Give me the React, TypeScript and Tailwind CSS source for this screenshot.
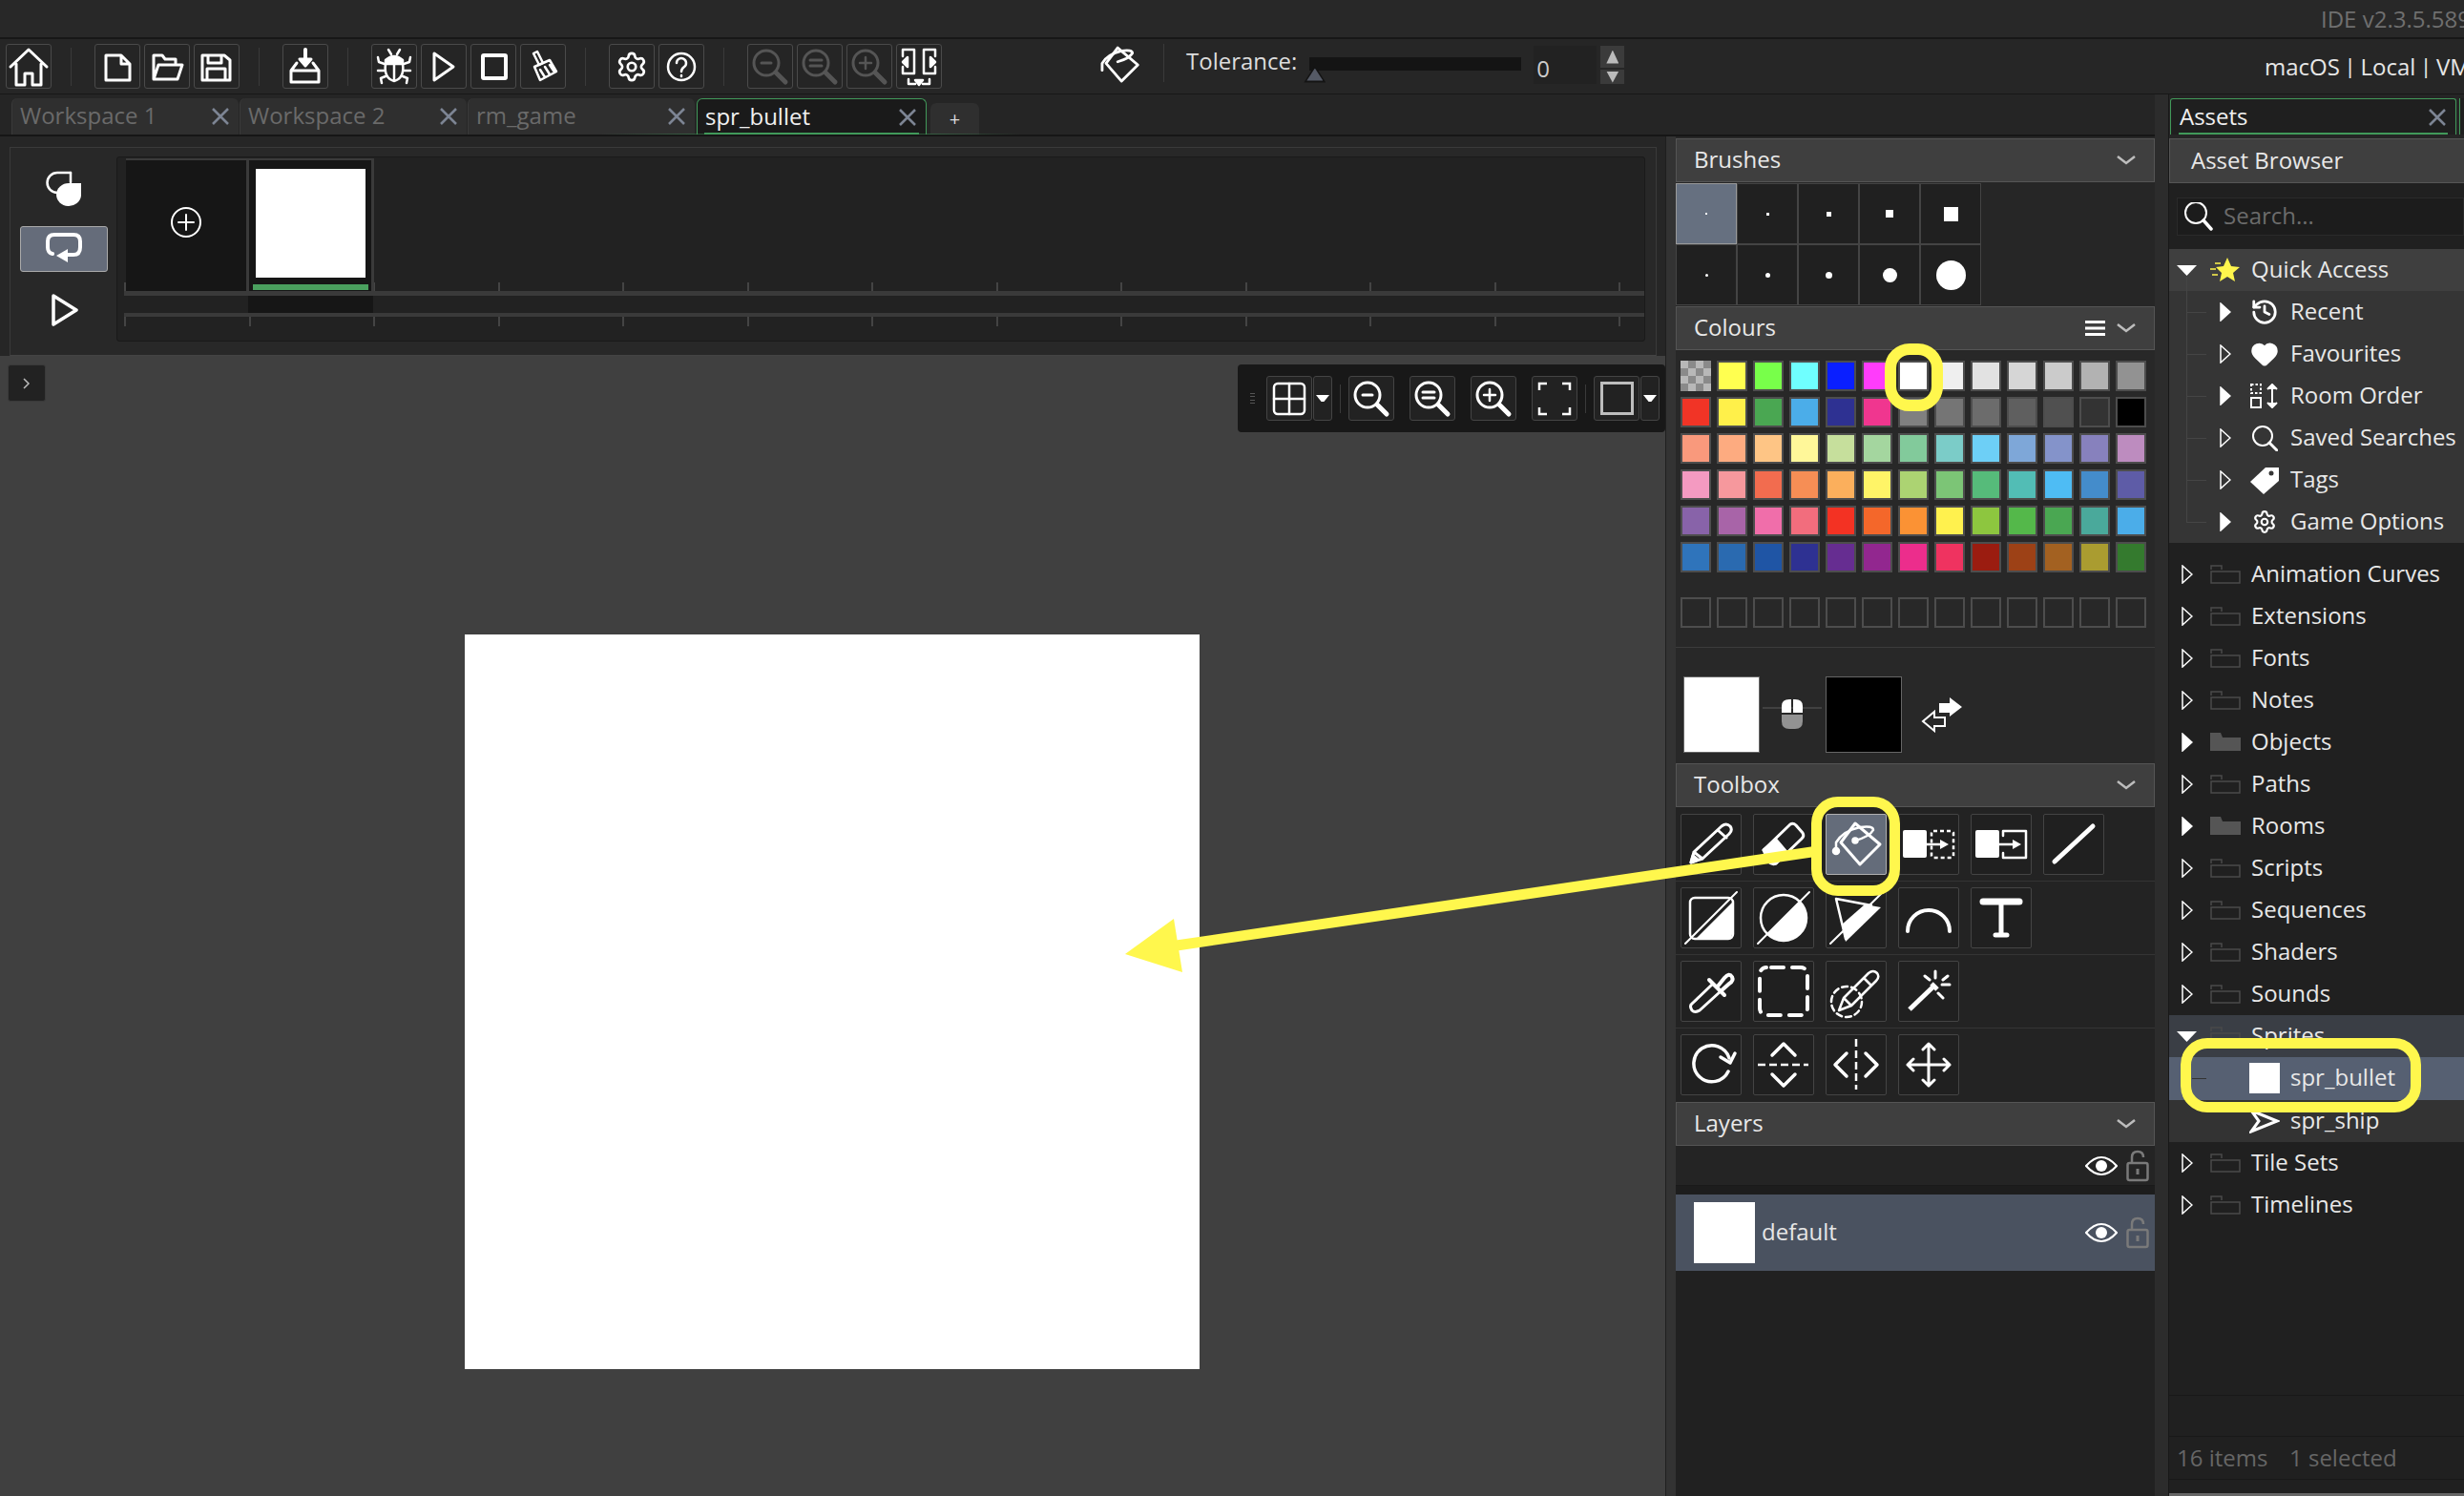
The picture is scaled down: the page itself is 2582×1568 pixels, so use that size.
import type { ReactNode } from 'react';
import { History, Heart, Settings } from 'lucide-react';

// 48px toolbar icon, drawn in a 48 box
function Ico({ children, size = 48, box = 48, sw = 3, color = 'white' }: { children: ReactNode; size?: number; box?: number; sw?: number; color?: string }) {
  return (
    <svg width={size} height={size} viewBox={`0 0 ${box} ${box}`} fill="none" stroke={color} strokeWidth={sw} strokeLinejoin="round" strokeLinecap="round" className="shrink-0">
      {children}
    </svg>
  );
}

function Btn({ children }: { children: ReactNode }) {
  return <div className="w-[48px] h-[47px] shrink-0 flex items-center justify-center rounded-[3px] border border-[#4a4a4a] bg-[#252525]">{children}</div>;
}

function Sep() {
  return <div className="w-px h-[40px] bg-[#3a3a3a] ml-[20px] mr-[24px] shrink-0" />;
}

function Mag({ inner, color = 'white' }: { inner: 'minus' | 'eq' | 'plus'; color?: string }) {
  return (
    <Ico color={color}>
      <circle cx="20" cy="20" r="13" />
      <path d="M30 30 L40 40" strokeWidth="5" />
      {inner === 'minus' && <path d="M15 20 H25" />}
      {inner === 'eq' && <path d="M14 17 H26 M14 23 H26" />}
      {inner === 'plus' && <path d="M14 20 H26 M20 14 V26" strokeWidth="2.5" />}
    </Ico>
  );
}

function BucketIcon({ size = 64 }: { size?: number }) {
  return (
    <Ico size={size} box={64} sw={2.5}>
      <path d="M31 10 L57 32 L36 53 L16 30 Z" strokeWidth="3" />
      <path d="M31 28 Q46 24 50 17 Q50 12 36 14 Q18 18 11 30 V39" />
      <circle cx="31" cy="28" r="2.5" fill="white" />
      <circle cx="11" cy="39" r="3" fill="white" />
    </Ico>
  );
}

function TopToolbar() {
  return (
    <div className="h-[58px] flex items-center pl-[6px] bg-[#262626] border-b border-[#171717]">
      <Btn>
        <Ico>
          <path d="M5 24 L24 6 L43 24 M11 21 V43 H20 V31 H28 V43 H37 V21" />
        </Ico>
      </Btn>
      <Sep />
      <div className="flex gap-[4px]">
        <Btn>
          <Ico>
            <path d="M12 12 H28 L37 21 V38 H12 Z M28 12 V21 H37" />
          </Ico>
        </Btn>
        <Btn>
          <Ico>
            <path d="M10 37 V12 H19 L22 16 H33 V20 M10 37 L15 22 H40 L35 37 Z" />
          </Ico>
        </Btn>
        <Btn>
          <Ico>
            <path d="M9 12 H32 L38 17 V38 H9 Z M15 12 V20 H29 V12 M14 38 V26 H33 V38" />
          </Ico>
        </Btn>
      </div>
      <Sep />
      <Btn>
        <Ico>
          <path d="M9 28 V40 H38 V28 Z M9 28 L15 20 M38 28 L32 20" />
          <path d="M24 6 V18" strokeWidth="4" />
          <path d="M18 16 H30 L24 23 Z" fill="white" />
        </Ico>
      </Btn>
      <Sep />
      <div className="flex gap-[4px]">
        <Btn>
          <Ico sw={2.5}>
            <path d="M15 21 Q13 36 24 39 Q35 36 33 21 Z M24 21 V39" />
            <path d="M15 17 Q24 9 33 17 V19 H15 Z" fill="white" />
            <path d="M18 6 L21 11 M30 6 L27 11 M14 21 L8 19 L7 14 M14 28 H7 M15 34 L10 36 L11 41 M34 21 L40 19 L41 14 M34 28 H41 M33 34 L38 36 L37 41" />
          </Ico>
        </Btn>
        <Btn>
          <Ico>
            <path d="M14 10 L34 24 L14 38 Z" />
          </Ico>
        </Btn>
        <Btn>
          <Ico sw={4}>
            <rect x="13" y="12" width="24" height="24" rx="1" />
          </Ico>
        </Btn>
        <Btn>
          <Ico sw={2.5}>
            <path d="M14 10 L18 8 L24 20 L20 22 Z" />
            <path d="M15 24 L31 17 L38 29 L21 38 Z M21 27 L26 35 M26 24 L31 32 M31 22 L35 28" />
          </Ico>
        </Btn>
      </div>
      <Sep />
      <div className="flex gap-[4px]">
        <Btn>
          <Settings size={34} color="white" strokeWidth={1.9} />
        </Btn>
        <Btn>
          <Ico sw={2.5}>
            <circle cx="24" cy="24" r="14" />
            <path d="M19 20 A5 5 0 1 1 27 24 C25 25.5 24 26.5 24 29 M24 33 V34" />
          </Ico>
        </Btn>
      </div>
      <Sep />
      <div className="flex gap-[4px]">
        <Btn>
          <Mag inner="minus" color="#555555" />
        </Btn>
        <Btn>
          <Mag inner="eq" color="#555555" />
        </Btn>
        <Btn>
          <Mag inner="plus" color="#555555" />
        </Btn>
        <Btn>
          <Ico sw={2.5}>
            <path d="M7 13 V6 H19 V31 H7 V24 M41 13 V6 H29 V31 H41 V24 M13 37 V42 H20 M35 37 V42 H28" />
            <path d="M12 14 L7 19 L12 24 Z M36 14 L41 19 L36 24 Z M20 38 H28 L24 43 Z" fill="white" />
          </Ico>
        </Btn>
      </div>
      <div className="ml-[159px] mb-[4px] flex items-center">
        <Ico size={52} box={64}>
          <path d="M31 10 L57 32 L36 53 L16 30 Z" strokeWidth="3.5" />
          <path d="M31 28 Q46 24 50 17 Q50 12 36 14 Q18 18 11 30 V39" strokeWidth="3.5" />
        </Ico>
      </div>
      <div className="w-px h-[40px] bg-[#3a3a3a] ml-[21px] mr-[23px] mb-[8px]" />
      <span className="text-[24px] text-[#dddddd] mb-[11px] leading-none">Tolerance:</span>
      <div className="relative ml-[13px] w-[222px] h-[14px] bg-[#141414] mb-[6px]">
        <div className="absolute left-[-6px] top-[9px] w-[23px] h-[18px] bg-[#141414] [clip-path:polygon(50%_0,100%_100%,0_100%)]" />
        <div className="absolute left-[-3px] top-[12px] w-[17px] h-[13px] bg-[#555a66] [clip-path:polygon(50%_0,100%_100%,0_100%)]" />
      </div>
      <div className="ml-[13px] w-[66px] h-[40px] bg-[#222222] flex items-end text-[#cccccc] text-[24px] pl-[3px] leading-[32px] mb-[3px]">0</div>
      <div className="ml-[4px] w-[25px] h-[40px] flex flex-col gap-[2px] mb-[3px]">
        <div className="h-[23px] bg-[#3b3b3b] flex items-center justify-center">
          <div className="w-[13px] h-[14px] bg-[#bbbbbb] [clip-path:polygon(50%_0,100%_100%,0_100%)]" />
        </div>
        <div className="h-[15px] bg-[#3b3b3b] flex items-center justify-center">
          <div className="w-[13px] h-[12px] bg-[#bbbbbb] [clip-path:polygon(0_0,100%_0,50%_100%)]" />
        </div>
      </div>
      <div className="flex-1" />
      <div className="w-[209px] overflow-hidden whitespace-nowrap text-[24px] text-[#e6e6e6] leading-none [word-spacing:-2px]">macOS | Local | VM | Default</div>
    </div>
  );
}

function CloseX({ color = '#7d8594' }: { color?: string }) {
  return (
    <svg width="18" height="18" viewBox="0 0 18 18" fill="none" stroke={color} strokeWidth="2.5" className="shrink-0">
      <path d="M1 1 L17 17 M17 1 L1 17" />
    </svg>
  );
}

function Tab({ label, active }: { label: string; active?: boolean }) {
  return (
    <div className={`h-[38px] shrink-0 flex items-center justify-between pl-[8px] pr-[10px] rounded-t-[6px] text-[24px] leading-none ${active ? 'w-[241px] ml-px bg-[#1a1a1a] text-[#f0f0f0] border border-b-0 border-[#41995a] relative' : 'w-[238px] bg-[#2f2f2f] text-[#6a6a6a] border-l border-[#3a3a3a]'}`}>
      <span className="mb-[2px]">{label}</span>
      <CloseX />
      {active && <div className="absolute left-[7px] right-[7px] bottom-0 h-[2px] bg-[#41995a]" />}
    </div>
  );
}

function TabBar() {
  return (
    <div className="h-[44px] bg-[#252525] border-b-2 border-[#161616] relative">
      <div className="flex items-end pl-[12px] pt-[4px] gap-[1px]">
        <Tab label="Workspace 1" />
        <Tab label="Workspace 2" />
        <Tab label="rm_game" />
        <Tab label="spr_bullet" active />
        <div className="w-[51px] h-[33px] ml-[3px] bg-[#2f2f2f] rounded-t-[6px] flex items-center justify-center text-[#dddddd] text-[20px] leading-none">+</div>
      </div>
      <div className="absolute left-[630px] bottom-0 w-[440px] h-px bg-gradient-to-r from-transparent via-[#41995a] to-transparent" />
    </div>
  );
}

function Ticks({ n, h }: { n: number; h: string }) {
  return (
    <div className={`flex ${h}`}>
      {Array.from({ length: n }).map((_, i) => (
        <div key={i} className="w-[130.5px] shrink-0 h-full border-l-2 border-[#444444]" />
      ))}
    </div>
  );
}

function Timeline() {
  return (
    <div className="h-[230px] shrink-0 bg-[#262626] pt-[11px] pl-[10px] pr-[9px]">
      <div className="h-[219px] flex bg-[#282828] border border-[#3a3a3a] border-b-[#444444]">
        <div className="w-[111px] shrink-0 flex flex-col items-center pl-[1px]">
          <div className="mt-[24px]">
            <Ico size={38} box={38} sw={2.5}>
              <path d="M26 2 H12 A10 10 0 0 0 12 23" />
              <path d="M26 2 V12" />
              <path d="M24 13 H37 V26 A13 12 0 1 1 24 13 Z" fill="white" stroke="none" />
            </Ico>
          </div>
          <div className="mt-[20px] w-[92px] h-[48px] flex items-center justify-center bg-[#656c7a] border border-[#aaaaaa] rounded-[3px]">
            <Ico size={40} box={40} sw={4}>
              <path d="M8 25 Q3 24 3 18 V12 Q3 5 10 5 H30 Q37 5 37 12 V18 Q37 26 30 26 H22" />
              <path d="M24 20 L12 27 L24 34 Z" fill="white" stroke="none" />
            </Ico>
          </div>
          <div className="mt-[23px]">
            <Ico size={34} box={34} sw={3.5}>
              <path d="M6 2 L30 17 L6 32 Z" />
            </Ico>
          </div>
        </div>
        <div className="mt-[9px] w-[1602px] h-[194px] bg-[#222222] border border-[#1a1a1a] rounded-[3px] pl-[7px] pt-px">
          <div className="relative h-[139px]">
            <div className="absolute left-0 bottom-0">
              <Ticks n={13} h="h-[9px]" />
            </div>
            <div className="relative flex h-full pl-[2px]">
              <div className="w-[129px] h-full bg-[#161616] border-t-2 border-[#3a3a3a] border-r-[3px] flex items-center justify-center pb-[8px]">
                <Ico size={34} box={34} sw={2}>
                  <circle cx="17" cy="17" r="15" />
                  <path d="M9 17 H25 M17 9 V25" />
                </Ico>
              </div>
              <div className="w-[131px] h-full bg-[#161616] border-t-2 border-r-[3px] border-[#3a3a3a] flex flex-col items-center">
                <div className="mt-[9px] w-[115px] h-[114px] bg-white" />
                <div className="mt-[7px] w-[121px] h-[6px] bg-[#4aa05e]" />
              </div>
            </div>
          </div>
          <div className="h-[5px] bg-[#3a3a3a]" />
          <div className="h-[18px] pl-[130px]">
            <div className="w-[131px] h-full bg-[#161616]" />
          </div>
          <div className="h-[4px] bg-[#3a3a3a]" />
          <Ticks n={13} h="h-[10px]" />
        </div>
      </div>
    </div>
  );
}

function FloatBtn({ children }: { children: ReactNode }) {
  return <div className="w-[48px] h-[47px] rounded-[3px] border border-[#444444] bg-[#222222] flex items-center justify-center shrink-0">{children}</div>;
}

function Drop() {
  return (
    <div className="w-[20px] h-[47px] ml-px rounded-[3px] border border-[#444444] bg-[#222222] flex items-center justify-center shrink-0">
      <div className="w-[14px] h-[7px] bg-white [clip-path:polygon(0_0,100%_0,60%_100%,40%_100%)]" />
    </div>
  );
}

function Canvas() {
  return (
    <div className="relative flex-1 bg-[#404040] pl-[487px] pt-[292px]">
      <div className="w-[770px] h-[770px] bg-white" />
      <div className="absolute left-[8px] top-[9px] w-[40px] h-[39px] rounded-[3px] bg-[#222222] border border-[#3a3a3a] flex items-center justify-center text-[#bbbbbb]">
        <svg width="8" height="14" viewBox="0 0 8 14" fill="none" stroke="#bbbbbb" strokeWidth="1.5">
          <path d="M1 2 L6 7 L1 12" />
        </svg>
      </div>
      <div className="absolute left-[1297px] top-[9px] w-[448px] h-[71px] bg-[#181818] rounded-[4px] flex items-center pl-[13px]">
        <div className="w-[17px] h-[12px] flex flex-col justify-between items-start shrink-0">
          <div className="w-[5px] h-px bg-[#555555]" />
          <div className="w-[5px] h-px bg-[#555555]" />
          <div className="w-[5px] h-px bg-[#555555]" />
          <div className="w-[5px] h-px bg-[#555555]" />
        </div>
        <FloatBtn>
          <Ico size={38} box={38} sw={2.5}>
            <rect x="3" y="3" width="32" height="32" rx="4" />
            <path d="M19 3 V35 M3 19 H35" />
          </Ico>
        </FloatBtn>
        <Drop />
        <div className="w-px h-[30px] bg-[#3a3a3a] mx-[8px] shrink-0" />
        <FloatBtn>
          <Mag inner="minus" />
        </FloatBtn>
        <div className="w-[16px] shrink-0" />
        <FloatBtn>
          <Mag inner="eq" />
        </FloatBtn>
        <div className="w-[16px] shrink-0" />
        <FloatBtn>
          <Mag inner="plus" />
        </FloatBtn>
        <div className="w-[16px] shrink-0" />
        <FloatBtn>
          <Ico size={38} box={38} sw={2.5}>
            <path d="M3 10 V3 H11 M27 3 H35 V10 M35 28 V35 H27 M11 35 H3 V28" strokeLinecap="butt" strokeLinejoin="miter" />
          </Ico>
        </FloatBtn>
        <div className="w-px h-[30px] bg-[#3a3a3a] mx-[8px] shrink-0" />
        <FloatBtn>
          <div className="w-[35px] h-[35px] border-[3px] border-[#bdbdbd]" />
        </FloatBtn>
        <Drop />
      </div>
    </div>
  );
}

function PanelHeader({ title, children }: { title: string; children?: ReactNode }) {
  return (
    <div className="h-[46px] shrink-0 bg-[#3f3f3f] border border-[#555555] flex items-center pl-[18px] pr-[19px] text-[24px] text-[#e8e8e8] leading-none">
      <span className="flex-1 pb-[2px]">{title}</span>
      {children}
      <svg width="20" height="12" viewBox="0 0 20 12" fill="none" stroke="#bdbdbd" strokeWidth="2.5">
        <path d="M1 2 L10 9 L19 2" />
      </svg>
    </div>
  );
}

const brushSizes = [2, 3, 5, 8, 15];
const circleSizes = [3, 5, 7, 15, 31];

function Brushes() {
  return (
    <div className="bg-[#262626] h-[130px] shrink-0 pt-px">
      {[brushSizes, circleSizes].map((row, r) => (
        <div key={r} className="flex h-[64px]">
          {row.map((s, i) => (
            <div key={i} className={`w-[64px] h-[64px] flex items-center justify-center border ${r === 0 && i === 0 ? 'bg-[#667080] border-[#9a9a9a]' : 'bg-[#202020] border-[#444444]'}`}>
              <div className={`bg-white ${r === 1 ? 'rounded-full' : ''}`} style={{ width: s, height: s }} />
            </div>
          ))}
        </div>
      ))}
    </div>
  );
}

const swatches = [
  '#ffff50', '#78ff4a', '#6fffff', '#0a1fff', '#ff3cfb', '#ffffff', '#efefef', '#e2e2e2', '#d6d6d6', '#cbcbcb', '#b2b2b2', '#929292',
  '#f13426', '#fff04a', '#4aa752', '#4bade9', '#2e3192', '#f0368f', '#808080', '#757575', '#6c6c6c', '#5f5f5f', '#505050', '#333333', '#000000',
  '#f9997c', '#fdab80', '#fec585', '#fff799', '#c6df9c', '#a4d69f', '#82ca9b', '#7bccc8', '#6dcff6', '#7ea7d8', '#8493ca', '#8781bd', '#bd8cbf',
  '#f49ac1', '#f6989d', '#f26c4f', '#f68e55', '#fbaf5c', '#fff467', '#acd372', '#7cc576', '#56bb7a', '#52bdb5', '#4ebcf4', '#448ccb', '#5e5ca7',
  '#8863a9', '#a864a8', '#f06eaa', '#f26d7d', '#f33223', '#f4672a', '#fb9234', '#fff14e', '#8dc63f', '#54b84a', '#4aa752', '#4aa99b', '#4bade9',
  '#2f74bb', '#2a6ab0', '#1f55a5', '#2e3192', '#662d91', '#92278f', '#ec2d8c', '#ef3360', '#9b1c10', '#9d4116', '#a36121', '#aa9c30', '#347a2e',
];

function Colours() {
  return (
    <div className="h-[433px] shrink-0 bg-[#282828] pt-[11px]">
      <div className="grid grid-cols-[repeat(13,32px)] gap-[6px] pl-[5px]">
        <div className="w-[32px] h-[32px] bg-[conic-gradient(#8a8a8a_25%,#b8b8b8_0_50%,#8a8a8a_0_75%,#b8b8b8_0)] bg-[length:16px_16px]" />
        {swatches.map((c, i) => (
          <div key={i} className="w-[32px] h-[32px] border-2 border-[#4d4d4d]" style={{ backgroundColor: c }} />
        ))}
      </div>
      <div className="grid grid-cols-[repeat(13,32px)] gap-[6px] pl-[5px] mt-[26px]">
        {Array.from({ length: 13 }).map((_, i) => (
          <div key={i} className="w-[32px] h-[32px] border-2 border-[#4d4d4d]" />
        ))}
      </div>
      <div className="mt-[20px] h-px bg-[#3c3c3c]" />
      <div className="flex pl-[8px] pt-[30px]">
        <div className="w-[80px] h-[80px] bg-white border border-[#666666]" />
        <svg width="62" height="34" viewBox="0 0 62 34" className="ml-[3px] mt-[23px] shrink-0">
          <path d="M0 10 H62" stroke="#4a4a4a" strokeWidth="1.5" />
          <path d="M20 15 V8 Q20 1 28 1 H30 V15 Z M42 15 V8 Q42 1 34 1 H32 V15 Z" fill="white" />
          <path d="M20 17 H42 V24 Q42 32 34 32 H28 Q20 32 20 24 Z" fill="#929292" />
        </svg>
        <div className="w-[80px] h-[80px] ml-[4px] bg-black border border-[#666666]" />
        <svg width="46" height="38" viewBox="0 0 46 38" className="ml-[19px] mt-[21px] shrink-0">
          <path d="M20 7 H31 V1 L44 11 L31 21 V17 H20 Z" fill="white" />
          <path d="M26 22 H15 V16 L3 26 L15 36 V31 H26 Z" fill="none" stroke="white" strokeWidth="2" />
        </svg>
      </div>
    </div>
  );
}

function Tool({ children, active }: { children: ReactNode; active?: boolean }) {
  return (
    <div className={`w-[64px] h-[64px] shrink-0 rounded-[2px] border flex items-center justify-center ${active ? 'bg-[#646c7a] border-[#b0b0b0]' : 'bg-[#202020] border-[#444444]'}`}>
      {children}
    </div>
  );
}

function ToolRow({ children, last }: { children: ReactNode; last?: boolean }) {
  return <div className={`h-[77px] shrink-0 flex gap-[12px] pl-[5px] pt-[6px] ${last ? '' : 'border-b border-[#343434]'}`}>{children}</div>;
}

function Toolbox() {
  return (
    <div className="h-[309px] shrink-0 bg-[#232323] pt-px">
      <ToolRow>
        <Tool>
          <Ico size={64} box={64} sw={3}>
            <path d="M11 51 L14 40 L43 13 Q48 9 52 13 Q55 17 51 21 L23 47 Z M14 40 L23 47 M39 17 L48 25" />
            <path d="M11 51 L13 44 L18 48 Z" fill="white" />
          </Ico>
        </Tool>
        <Tool>
          <Ico size={64} box={64} sw={3}>
            <path d="M11 38 L39 11 Q42 9 45 12 L52 20 Q54 23 51 26 L24 52 Z" />
            <path d="M11 38 L24 27 L35 40 L24 52 Q20 54 16 50 Z" fill="white" />
          </Ico>
        </Tool>
        <Tool active>
          <BucketIcon />
        </Tool>
        <Tool>
          <Ico size={64} box={64} sw={2.5}>
            <rect x="5" y="17" width="25" height="29" rx="2" fill="white" stroke="none" />
            <rect x="35" y="18" width="23" height="28" rx="2" strokeDasharray="4 3" strokeLinecap="butt" />
            <path d="M28 32 H46" />
            <path d="M44 27 L53 32 L44 37 Z" fill="white" stroke="none" />
          </Ico>
        </Tool>
        <Tool>
          <Ico size={64} box={64} sw={2.5}>
            <rect x="5" y="17" width="25" height="29" rx="2" fill="white" stroke="none" />
            <path d="M34 23 V18 H58 V46 H34 V41" />
            <path d="M28 32 H46" />
            <path d="M44 27 L53 32 L44 37 Z" fill="white" stroke="none" />
          </Ico>
        </Tool>
        <Tool>
          <Ico size={64} box={64} sw={5}>
            <path d="M12 50 L52 13" />
          </Ico>
        </Tool>
      </ToolRow>
      <ToolRow>
        <Tool>
          <Ico size={64} box={64} sw={2}>
            <rect x="10" y="11" width="45" height="43" rx="5" strokeWidth="2.5" />
            <path d="M54 16 V49 Q54 54 49 54 H16 Z" fill="white" stroke="none" />
            <path d="M5 59 L59 5" />
          </Ico>
        </Tool>
        <Tool>
          <Ico size={64} box={64} sw={2}>
            <circle cx="32" cy="32" r="24" strokeWidth="2.5" />
            <path d="M49 15 A24 24 0 0 1 15 49 Z" fill="white" stroke="none" />
            <path d="M5 59 L59 5" />
          </Ico>
        </Tool>
        <Tool>
          <Ico size={64} box={64} sw={2}>
            <path d="M11 12 L48 19 M11 12 L21 54" strokeWidth="2.5" />
            <path d="M58 21 L21 57 L17 39 L41 18 Z" fill="white" stroke="none" />
            <path d="M5 59 L58 7" />
          </Ico>
        </Tool>
        <Tool>
          <Ico size={64} box={64} sw={4}>
            <path d="M10 46 A22 22 0 0 1 54 46" />
          </Ico>
        </Tool>
        <Tool>
          <Ico size={64} box={64} sw={5}>
            <path d="M32 15 V49" />
            <path d="M13 15 H51" strokeWidth="7" />
            <path d="M26 50 H38" strokeWidth="5" />
          </Ico>
        </Tool>
      </ToolRow>
      <ToolRow>
        <Tool>
          <Ico size={64} box={64} sw={3}>
            <path d="M12 52 Q9 47 12 45 L34 24 L42 32 L20 52 Q15 55 12 52 Z" />
            <path d="M30 20 L46 36 M38 28 L46 18 Q51 12 54 17 Q56 21 51 24 L42 32" strokeWidth="4" />
          </Ico>
        </Tool>
        <Tool>
          <Ico size={64} box={64} sw={4}>
            <rect x="7" y="7" width="50" height="50" rx="7" strokeDasharray="13 9" strokeDashoffset="-5" />
          </Ico>
        </Tool>
        <Tool>
          <Ico size={64} box={64} sw={2.5}>
            <circle cx="22" cy="43" r="16" strokeDasharray="6 4" />
            <path d="M14 52 L19 39 L45 13 Q50 9 54 13 Q57 17 53 21 L27 47 Z M19 39 L27 47 M40 18 L48 26" />
          </Ico>
        </Tool>
        <Tool>
          <Ico size={64} box={64} sw={3}>
            <path d="M12 51 L36 28" strokeWidth="5" strokeLinecap="butt" />
            <path d="M35 24 L41 30" strokeWidth="5" strokeLinecap="butt" />
            <path d="M39 11 V18 M28 16 L33 20 M52 16 L47 20 M46 25 H54 M42 34 L47 39" />
          </Ico>
        </Tool>
      </ToolRow>
      <ToolRow last>
        <Tool>
          <Ico size={64} box={64} sw={3.5}>
            <path d="M51 25 A19 19 0 1 0 50 39" />
            <path d="M42 24 L52 30 L57 20" />
          </Ico>
        </Tool>
        <Tool>
          <Ico size={64} box={64} sw={3.5}>
            <path d="M5 32 H58" strokeDasharray="8 4" strokeLinecap="butt" strokeWidth="2.5" />
            <path d="M20 22 L32 10 L44 22 M20 42 L32 54 L44 42" />
          </Ico>
        </Tool>
        <Tool>
          <Ico size={64} box={64} sw={3.5}>
            <path d="M32 5 V58" strokeDasharray="8 4" strokeLinecap="butt" strokeWidth="2.5" />
            <path d="M22 20 L10 32 L22 44 M42 20 L54 32 L42 44" />
          </Ico>
        </Tool>
        <Tool>
          <Ico size={64} box={64} sw={3}>
            <path d="M32 10 V54 M10 32 H54 M26 16 L32 10 L38 16 M26 48 L32 54 L38 48 M16 26 L10 32 L16 38 M48 26 L54 32 L48 38" />
          </Ico>
        </Tool>
      </ToolRow>
    </div>
  );
}

function EyeLock() {
  return (
    <div className="flex items-center">
      <svg width="34" height="24" viewBox="0 0 34 24" fill="none" stroke="white" strokeWidth="2.2">
        <path d="M1 12 Q17 -6 33 12 Q17 30 1 12 Z" />
        <circle cx="17" cy="12" r="6" fill="white" stroke="none" />
      </svg>
      <svg width="24" height="34" viewBox="0 0 24 34" fill="none" stroke="#7a7a7a" strokeWidth="2.5" className="ml-[9px]">
        <path d="M6 14 V8 Q6 2 12 2 Q18 2 18 8" />
        <rect x="1.5" y="14" width="21" height="18" rx="2" />
        <path d="M12 20 V26" strokeWidth="3" />
      </svg>
    </div>
  );
}

function Layers() {
  return (
    <div className="flex-1 bg-[#212121] flex flex-col">
      <div className="h-[42px] bg-[#242424] border-b border-[#1a1a1a] flex items-center justify-end pr-[6px]">
        <EyeLock />
      </div>
      <div className="h-[9px] bg-[#1d1d1d]" />
      <div className="h-[80px] bg-[#4a5260] flex items-center pl-[19px] pr-[6px]">
        <div className="w-[64px] h-[64px] bg-white" />
        <span className="flex-1 ml-[7px] text-[24px] text-[#e6e6e6] leading-none pb-[2px]">default</span>
        <EyeLock />
      </div>
    </div>
  );
}

function Expander({ kind }: { kind: 'open' | 'solid' | 'outline' | 'none' }) {
  if (kind === 'none') return <div className="w-[12px] shrink-0" />;
  if (kind === 'open') {
    return (
      <svg width="21" height="11" viewBox="0 0 21 11" className="shrink-0 -mx-[5px]">
        <path d="M0 0 H21 L10.5 11 Z" fill="white" />
      </svg>
    );
  }
  return (
    <svg width="12" height="20" viewBox="0 0 12 20" className="shrink-0">
      <path d="M1 1 L11 10 L1 19 Z" fill={kind === 'solid' ? 'white' : 'none'} stroke="white" strokeWidth="1.5" />
    </svg>
  );
}

function Folder({ solid }: { solid?: boolean }) {
  return (
    <svg width="32" height="20" viewBox="0 0 32 20" className="shrink-0">
      {solid ? (
        <path d="M0 0 H11 L13 5 H32 V19 H0 Z" fill="#555555" />
      ) : (
        <path d="M1 5 V1 H12 V5 M1 7 H31 V19 H1 Z" fill="none" stroke="#4a4a4a" strokeWidth="1.5" />
      )}
    </svg>
  );
}

function ChildRow({ kind, icon, label }: { kind: 'solid' | 'outline' | 'none'; icon: ReactNode; label: string }) {
  return (
    <div className="h-[44px] flex items-center pl-[53px] text-[24px] leading-none text-[#e8e8e8]">
      <Expander kind={kind} />
      <div className="w-[30px] ml-[20px] flex justify-center shrink-0">{icon}</div>
      <span className="ml-[12px] whitespace-nowrap pb-[2px]">{label}</span>
    </div>
  );
}

function FolderRow({ label, solid }: { label: string; solid?: boolean }) {
  return (
    <div className="h-[44px] flex items-center pl-[13px] text-[24px] leading-none text-[#e8e8e8]">
      <Expander kind={solid ? 'solid' : 'outline'} />
      <div className="ml-[18px]">
        <Folder solid={solid} />
      </div>
      <span className="ml-[11px] whitespace-nowrap pb-[2px]">{label}</span>
    </div>
  );
}

function QuickAccess() {
  return (
    <div className="relative bg-[#353535] h-[308px] shrink-0">
      <div className="h-[44px] bg-[#3f3f3f] flex items-center pl-[13px] text-[24px] leading-none text-[#e8e8e8]">
        <Expander kind="open" />
        <svg width="32" height="28" viewBox="0 0 32 28" className="ml-[19px] mr-[11px] shrink-0">
          <path d="M18 1 L22 10 L31 11 L24 17 L26 26 L18 21 L10 26 L12 17 L6 11 L14 10 Z" fill="#fff64d" />
          <path d="M5 7 H11 M0 13 H6 M2 19 H8" stroke="#fff64d" strokeWidth="1.5" />
        </svg>
        <span className="pb-[2px]">Quick Access</span>
      </div>
      <ChildRow kind="solid" label="Recent" icon={<History size={30} color="white" strokeWidth={2.2} />} />
      <ChildRow kind="outline" label="Favourites" icon={<Heart size={32} color="white" fill="white" />} />
      <ChildRow
        kind="solid"
        label="Room Order"
        icon={
          <svg width="30" height="26" viewBox="0 0 30 26" fill="none" stroke="white" strokeWidth="2">
            <rect x="1" y="1" width="10" height="9" strokeDasharray="2.5 2" />
            <rect x="1" y="15" width="10" height="10" />
            <path d="M23 2 V24" />
            <path d="M18 6 L23 1 L28 6 M18 20 L23 25 L28 20" fill="white" />
          </svg>
        }
      />
      <ChildRow
        kind="outline"
        label="Saved Searches"
        icon={
          <svg width="28" height="28" viewBox="0 0 28 28" fill="none" stroke="white" strokeWidth="2">
            <circle cx="12" cy="12" r="10" />
            <path d="M19 19 L27 27" strokeWidth="3" strokeLinecap="round" />
          </svg>
        }
      />
      <ChildRow
        kind="outline"
        label="Tags"
        icon={
          <svg width="30" height="30" viewBox="0 0 30 30">
            <path d="M0 17 L16 2 H30 V16 L14 30 Z" fill="white" />
            <circle cx="22" cy="8" r="2.5" fill="#353535" />
          </svg>
        }
      />
      <ChildRow kind="solid" label="Game Options" icon={<Settings size={26} color="white" strokeWidth={2} />} />
      <div className="absolute left-[18px] top-[29px] bottom-[22px] w-px bg-[#454545]" />
      {[66, 110, 154, 198, 242, 286].map(t => (
        <div key={t} className="absolute left-[18px] w-[21px] h-px bg-[#454545]" style={{ top: t }} />
      ))}
    </div>
  );
}

function AssetsPanel() {
  return (
    <div className="w-[324px] shrink-0 flex bg-[#2c2c2c]">
      <div className="w-[15px] shrink-0 border-r border-[#181818]" />
      <div className="flex-1 min-w-0 flex flex-col bg-[#202020]">
        <div className="h-[46px] shrink-0 bg-[#252525] pt-[4px] flex pl-[1px] gap-[3px]">
          <div className="relative w-[300px] h-[38px] shrink-0 bg-[#1f1f1f] border border-b-0 border-[#41995a] rounded-t-[3px] flex items-center justify-between pl-[9px] pr-[10px] text-[24px] text-[#f0f0f0] leading-none">
            <span className="mb-[2px]">Assets</span>
            <CloseX />
            <div className="absolute left-[8px] right-[8px] bottom-0 h-[2px] bg-[#41995a]" />
          </div>
          <div className="flex-1 h-[38px] bg-[#1f1f1f] border-l border-[#41995a]" />
        </div>
        <div className="h-[47px] shrink-0 bg-[#3f3f3f] border border-[#555555] border-r-0 pl-[22px] flex items-center text-[24px] text-[#e8e8e8] leading-none">
          <span className="pb-[2px]">Asset Browser</span>
        </div>
        <div className="h-[69px] shrink-0 pl-[8px] pt-[15px]">
          <div className="h-[40px] bg-[#1c1c1c] border border-[#2a2a2a] flex items-center pl-[7px]">
            <svg width="30" height="30" viewBox="0 0 30 30" fill="none" stroke="white" strokeWidth="2" className="shrink-0">
              <circle cx="12" cy="11" r="11" />
              <path d="M20 19 L28 28" strokeWidth="3.5" strokeLinecap="round" />
            </svg>
            <span className="ml-[11px] text-[24px] text-[#6b6b6b] leading-none pb-[2px]">Search...</span>
          </div>
        </div>
        <QuickAccess />
        <div className="h-[11px] shrink-0" />
        {['Animation Curves', 'Extensions', 'Fonts', 'Notes'].map(l => (
          <FolderRow key={l} label={l} />
        ))}
        <FolderRow label="Objects" solid />
        <FolderRow label="Paths" />
        <FolderRow label="Rooms" solid />
        {['Scripts', 'Sequences', 'Shaders', 'Sounds'].map(l => (
          <FolderRow key={l} label={l} />
        ))}
        <div className="h-[44px] bg-[#3a3e45] flex items-center pl-[13px] text-[24px] leading-none text-[#e8e8e8]">
          <Expander kind="open" />
          <div className="ml-[19px]">
            <Folder />
          </div>
          <span className="ml-[11px] pb-[2px]">Sprites</span>
        </div>
        <div className="relative h-[45px] bg-[#566072]">
          <ChildRow kind="none" label="spr_bullet" icon={<div className="w-[32px] h-[32px] bg-white shrink-0" />} />
          <div className="absolute left-[24px] top-[22px] w-[15px] h-px bg-[#333333]" />
        </div>
        <div className="bg-[#333333]">
          <ChildRow
            kind="none"
            label="spr_ship"
            icon={
              <svg width="32" height="26" viewBox="0 0 32 26" className="shrink-0" fill="none" stroke="white" strokeWidth="3">
                <path d="M2 2 L29 13 L2 24 L10 13 Z" />
              </svg>
            }
          />
        </div>
        <FolderRow label="Tile Sets" />
        <FolderRow label="Timelines" />
        <div className="h-[178px] shrink-0 border-b border-[#181818]" />
        <div className="h-[43px] shrink-0 border-b border-[#181818]" />
        <div className="h-[45px] shrink-0 border-b border-[#181818] flex items-center pl-[8px] text-[24px] text-[#666666] leading-none">
          <span className="w-[118px]">16 items</span>
          <span>1 selected</span>
        </div>
        <div className="h-[14px] shrink-0" />
        <div className="flex-1 bg-[#666666]" />
      </div>
    </div>
  );
}

function Annotations() {
  return (
    <>
      <svg width="2582" height="1568" viewBox="0 0 2582 1568" className="absolute left-0 top-0 pointer-events-none">
        <path d="M1233 991 L1905 892" stroke="#fff74d" strokeWidth="11" />
        <path d="M1179 1000 L1230 963 L1239 1019 Z" fill="#fff74d" />
      </svg>
      <div className="absolute left-[1975px] top-[360px] w-[61px] h-[71px] border-[12px] border-[#fff74d] rounded-[26px]" />
      <div className="absolute left-[1898px] top-[835px] w-[93px] h-[104px] border-[11px] border-[#fff74d] rounded-[28px]" />
      <div className="absolute left-[2285px] top-[1088px] w-[252px] h-[78px] border-[11px] border-[#fff74d] rounded-[28px]" />
    </>
  );
}

export default function App() {
  return (
    <div className="relative w-[2582px] h-[1568px] overflow-hidden bg-[#262626] flex flex-col font-['Open_Sans','Noto_Sans',sans-serif]">
      <div className="h-[41px] shrink-0 bg-[#282828] border-b-2 border-[#171717] flex justify-end items-center">
        <div className="w-[150px] overflow-hidden whitespace-nowrap text-[24px] leading-none text-[#6f6f6f]">IDE v2.3.5.589</div>
      </div>
      <TopToolbar />
      <div className="flex-1 min-h-0 flex">
        <div className="w-[2258px] shrink-0 flex flex-col">
          <TabBar />
          <div className="flex-1 min-h-0 flex">
            <div className="w-[1745px] shrink-0 flex flex-col">
              <Timeline />
              <Canvas />
            </div>
            <div className="w-[11px] shrink-0 bg-[#333333] border-l border-[#1f1f1f]" />
            <div className="w-[502px] shrink-0 flex flex-col pt-[2px]">
              <PanelHeader title="Brushes" />
              <Brushes />
              <PanelHeader title="Colours">
                <svg width="21" height="16" viewBox="0 0 21 16" className="mr-[12px]">
                  <path d="M0 1.5 H21 M0 8 H21 M0 14.5 H21" stroke="white" strokeWidth="3" />
                </svg>
              </PanelHeader>
              <Colours />
              <PanelHeader title="Toolbox" />
              <Toolbox />
              <PanelHeader title="Layers" />
              <Layers />
            </div>
          </div>
        </div>
        <AssetsPanel />
      </div>
      <Annotations />
    </div>
  );
}
